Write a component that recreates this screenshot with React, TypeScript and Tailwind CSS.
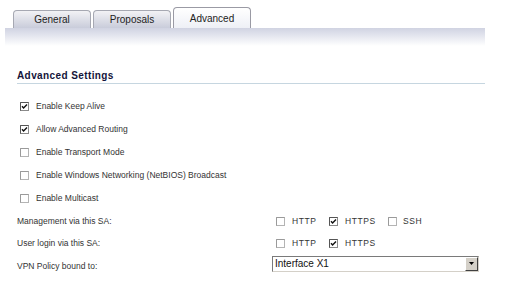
import React from "react";

const font = { fontFamily: '"Liberation Sans", Arial, sans-serif' };

function Box({ checked, light }: { checked?: boolean; light?: boolean }) {
  return (
    <svg width="9" height="9" viewBox="0 0 9 9" className="shrink-0">
      <rect x="0.5" y="0.5" width="8" height="8" fill="#fff" stroke={light ? "#b4b4b4" : "#8a8a8a"} />
      <path d="M0.5 8.5V0.5H8.5" fill="none" stroke={light ? "#9a9a9a" : "#555"} />
      {checked && <path d="M2 4.2L3.6 6L7 2.4" fill="none" stroke="#111" strokeWidth="1.4" />}
    </svg>
  );
}

function Tab({ label, active }: { label: string; active?: boolean }) {
  return (
    <div
      className={`w-[78px] flex items-center justify-center rounded-t-[4px] border border-b-0 text-[10px] text-[#222] ${
        active
          ? "h-[21px] border-[#9a9aa4] bg-gradient-to-b from-white to-[#eef0f6]"
          : "h-[18px] border-[#a6a8b2] bg-gradient-to-b from-[#f2f2f5] to-[#c9ccda]"
      }`}
    >
      {label}
    </div>
  );
}

const options = [
  { label: "Enable Keep Alive", checked: true },
  { label: "Allow Advanced Routing", checked: true },
  { label: "Enable Transport Mode" },
  { label: "Enable Windows Networking (NetBIOS) Broadcast" },
  { label: "Enable Multicast" },
];

export default function App() {
  return (
    <div className="w-[528px] h-[290px] bg-white overflow-hidden" style={font}>
      <div className="pt-[7px] pl-[13px] flex items-end gap-[2px]">
        <Tab label="General" />
        <Tab label="Proposals" />
        <Tab label="Advanced" active />
      </div>
      <div className="ml-[5px] w-[480px] h-[18px] bg-gradient-to-b from-[#d0d3e2] to-white" />

      <div className="pl-[17px] pt-[25px]">
        <div className="w-[468px] h-[13px] border-b border-[#c6d6e0] text-[10px] font-bold tracking-[0.4px] text-[#14143a] leading-[10px]">
          Advanced Settings
        </div>

        <div className="pt-[18px] pl-[3px] flex flex-col gap-[14px]">
          {options.map((o) => (
            <div key={o.label} className="flex items-center h-[9px] gap-[7px] text-[8.5px] text-[#333]">
              <Box checked={o.checked} light={!o.checked} />
              <span>{o.label}</span>
            </div>
          ))}
        </div>

        <div className="pt-[7px] flex flex-col text-[8.5px] text-[#333]">
          <div className="flex items-center h-[22px]">
            <span className="w-[259px]">Management via this SA:</span>
            <div className="flex items-center">
              <Box light />
              <span className="ml-[7px] w-[37px] tracking-[0.6px]">HTTP</span>
              <Box checked />
              <span className="ml-[7px] w-[43px] tracking-[0.6px]">HTTPS</span>
              <Box light />
              <span className="ml-[6px] tracking-[0.6px]">SSH</span>
            </div>
          </div>
          <div className="flex items-center h-[22px]">
            <span className="w-[259px]">User login via this SA:</span>
            <div className="flex items-center">
              <Box light />
              <span className="ml-[7px] w-[37px] tracking-[0.6px]">HTTP</span>
              <Box checked />
              <span className="ml-[7px] tracking-[0.6px]">HTTPS</span>
            </div>
          </div>
          <div className="flex items-center h-[19px]">
            <span className="w-[255px] self-end">VPN Policy bound to:</span>
            <div className="w-[207px] h-[16px] flex items-center border border-t-[#7a7a7a] border-l-[#7a7a7a] border-r-[#d4d0c8] border-b-[#d4d0c8] bg-white">
              <span className="flex-1 pl-[2px] text-[10px] text-[#111]">Interface X1</span>
              <div className="w-[13px] h-[14px] flex items-center justify-center bg-[#d4d0c8] border border-t-white border-l-white border-r-[#404040] border-b-[#404040]">
                <svg width="5" height="3" viewBox="0 0 5 3">
                  <path d="M0 0H5L2.5 3Z" fill="#000" />
                </svg>
              </div>
            </div>
          </div>
        </div>
      </div>
    </div>
  );
}
